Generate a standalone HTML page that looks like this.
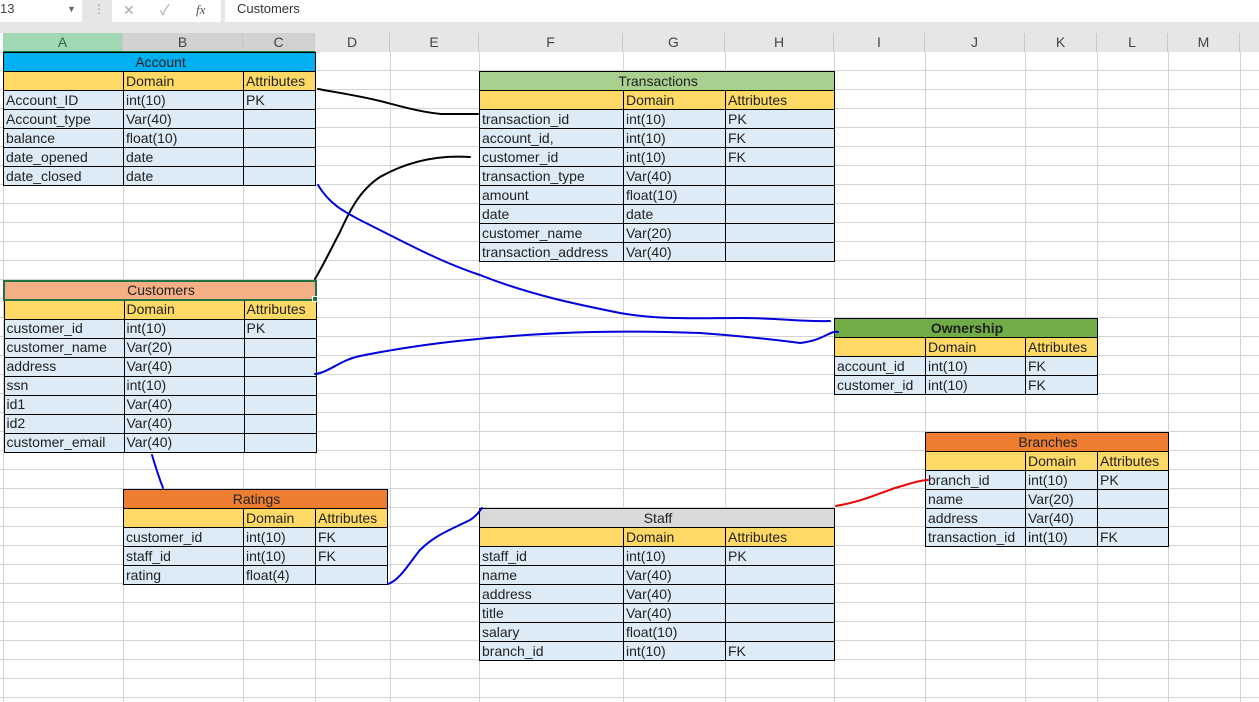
<!DOCTYPE html>
<html><head><meta charset="utf-8"><style>
*{box-sizing:border-box;margin:0;padding:0}
body{width:1259px;height:702px;overflow:hidden;background:#fff;font-family:"Liberation Sans","Noto Sans CJK SC",sans-serif;position:relative;color:#222}
.a{position:absolute}
table{position:absolute;border-collapse:collapse;table-layout:fixed;font-size:14px}
td{border:1px solid #000;height:19px;padding:0 0 0 2px;line-height:17px;white-space:nowrap;overflow:hidden;background:#DDEBF7}
tr.t td{text-align:center}
tr.h td{background:#FFD966}
.ch{position:absolute;top:33px;height:19px;font-size:14px;text-align:center;line-height:19px;color:#444;border-right:1px solid #C8C8C8;background:#E6E6E6}
</style></head><body>
<!-- top bars -->
<div class="a" style="left:0;top:0;width:1259px;height:33px;background:#E6E6E6"></div>
<div class="a" style="left:0;top:0;width:82px;height:22px;background:#fff;font-size:13px;line-height:18px;color:#444">13<span style="position:absolute;left:67px;top:0;font-size:9px;color:#666">▼</span></div>
<div class="a" style="left:93px;top:2px;font-size:12px;color:#999">⋮</div>
<div class="a" style="left:112px;top:0;width:109px;height:22px;background:#fff;font-size:14px;color:#aaa;line-height:20px"><span style="position:absolute;left:11px">✕</span><span style="position:absolute;left:48px">✓</span><span style="position:absolute;left:84px;font-style:italic;font-family:'Liberation Serif',serif;color:#555;font-size:13px">fx</span></div>
<div class="a" style="left:225px;top:0;width:1034px;height:22px;background:#fff;font-size:13px;line-height:18px;padding-left:12px;color:#333">Customers</div>
<!-- gridlines -->
<div class="a" style="left:0;top:52px;width:1259px;height:650px;background:repeating-linear-gradient(to bottom,transparent 0,transparent 18px,#D4D4D4 18px,#D4D4D4 19px)"></div>
<svg class="a" style="left:0;top:52px" width="1259" height="650"><g stroke="#D4D4D4" stroke-width="1">
<line x1="3.5" y1="0" x2="3.5" y2="650"/><line x1="123.5" y1="0" x2="123.5" y2="650"/><line x1="243.5" y1="0" x2="243.5" y2="650"/><line x1="315.5" y1="0" x2="315.5" y2="650"/><line x1="390.5" y1="0" x2="390.5" y2="650"/><line x1="479.5" y1="0" x2="479.5" y2="650"/><line x1="623.5" y1="0" x2="623.5" y2="650"/><line x1="725.5" y1="0" x2="725.5" y2="650"/><line x1="834.5" y1="0" x2="834.5" y2="650"/><line x1="925.5" y1="0" x2="925.5" y2="650"/><line x1="1025.5" y1="0" x2="1025.5" y2="650"/><line x1="1097.5" y1="0" x2="1097.5" y2="650"/><line x1="1168.5" y1="0" x2="1168.5" y2="650"/><line x1="1240.5" y1="0" x2="1240.5" y2="650"/></g></svg>
<!-- column headers -->
<div class="ch" style="left:3px;width:120px;background:#A0D8B3;color:#1E6B3A">A</div>
<div class="ch" style="left:123px;width:120px;background:#D2D2D2">B</div>
<div class="ch" style="left:243px;width:72px;background:#D2D2D2">C</div>
<div class="ch" style="left:315px;width:75px">D</div>
<div class="ch" style="left:390px;width:89px">E</div>
<div class="ch" style="left:479px;width:144px">F</div>
<div class="ch" style="left:623px;width:102px">G</div>
<div class="ch" style="left:725px;width:109px">H</div>
<div class="ch" style="left:834px;width:91px">I</div>
<div class="ch" style="left:925px;width:100px">J</div>
<div class="ch" style="left:1025px;width:72px">K</div>
<div class="ch" style="left:1097px;width:71px">L</div>
<div class="ch" style="left:1168px;width:72px">M</div>
<div class="ch" style="left:1240px;width:19px;border:none"></div>
<div class="a" style="left:3px;top:51px;width:312px;height:2px;background:#217346"></div>

<!-- Account -->
<table style="left:3px;top:52px;width:313px"><colgroup><col style="width:120px"><col style="width:120px"><col style="width:72px"></colgroup>
<tr class="t"><td colspan="3" style="background:#00B0F0">Account</td></tr>
<tr class="h"><td></td><td>Domain</td><td>Attributes</td></tr>
<tr><td>Account_ID</td><td>int(10)</td><td>PK</td></tr>
<tr><td>Account_type</td><td>Var(40)</td><td></td></tr>
<tr><td>balance</td><td>float(10)</td><td></td></tr>
<tr><td>date_opened</td><td>date</td><td></td></tr>
<tr><td>date_closed</td><td>date</td><td></td></tr></table>

<!-- Transactions -->
<table style="left:479px;top:71px;width:356px"><colgroup><col style="width:144px"><col style="width:102px"><col style="width:109px"></colgroup>
<tr class="t"><td colspan="3" style="background:#A9D08E">Transactions</td></tr>
<tr class="h"><td></td><td>Domain</td><td>Attributes</td></tr>
<tr><td>transaction_id</td><td>int(10)</td><td>PK</td></tr>
<tr><td>account_id,</td><td>int(10)</td><td>FK</td></tr>
<tr><td>customer_id</td><td>int(10)</td><td>FK</td></tr>
<tr><td>transaction_type</td><td>Var(40)</td><td></td></tr>
<tr><td>amount</td><td>float(10)</td><td></td></tr>
<tr><td>date</td><td>date</td><td></td></tr>
<tr><td>customer_name</td><td>Var(20)</td><td></td></tr>
<tr><td>transaction_address</td><td>Var(40)</td><td></td></tr></table>

<!-- Customers -->
<table style="left:3px;top:280px;width:313px"><colgroup><col style="width:120px"><col style="width:120px"><col style="width:72px"></colgroup>
<tr class="t"><td colspan="3" style="background:#F4B084;border:2px solid #217346">Customers</td></tr>
<tr class="h"><td></td><td>Domain</td><td>Attributes</td></tr>
<tr><td>customer_id</td><td>int(10)</td><td>PK</td></tr>
<tr><td>customer_name</td><td>Var(20)</td><td></td></tr>
<tr><td>address</td><td>Var(40)</td><td></td></tr>
<tr><td>ssn</td><td>int(10)</td><td></td></tr>
<tr><td>id1</td><td>Var(40)</td><td></td></tr>
<tr><td>id2</td><td>Var(40)</td><td></td></tr>
<tr><td>customer_email</td><td>Var(40)</td><td></td></tr></table>
<div class="a" style="left:312px;top:296px;width:6px;height:6px;background:#217346;border:1px solid #fff"></div>

<!-- Ownership -->
<table style="left:834px;top:318px;width:264px"><colgroup><col style="width:91px"><col style="width:100px"><col style="width:72px"></colgroup>
<tr class="t"><td colspan="3" style="background:#70AD47;font-weight:bold">Ownership</td></tr>
<tr class="h"><td></td><td>Domain</td><td>Attributes</td></tr>
<tr><td>account_id</td><td>int(10)</td><td>FK</td></tr>
<tr><td>customer_id</td><td>int(10)</td><td>FK</td></tr></table>

<!-- Branches -->
<table style="left:925px;top:432px;width:244px"><colgroup><col style="width:100px"><col style="width:72px"><col style="width:71px"></colgroup>
<tr class="t"><td colspan="3" style="background:#ED7D31">Branches</td></tr>
<tr class="h"><td></td><td>Domain</td><td>Attributes</td></tr>
<tr><td>branch_id</td><td>int(10)</td><td>PK</td></tr>
<tr><td>name</td><td>Var(20)</td><td></td></tr>
<tr><td>address</td><td>Var(40)</td><td></td></tr>
<tr><td>transaction_id</td><td>int(10)</td><td>FK</td></tr></table>

<!-- Ratings -->
<table style="left:123px;top:489px;width:265px"><colgroup><col style="width:120px"><col style="width:72px"><col style="width:72px"></colgroup>
<tr class="t"><td colspan="3" style="background:#ED7D31">Ratings</td></tr>
<tr class="h"><td></td><td>Domain</td><td>Attributes</td></tr>
<tr><td>customer_id</td><td>int(10)</td><td>FK</td></tr>
<tr><td>staff_id</td><td>int(10)</td><td>FK</td></tr>
<tr><td>rating</td><td>float(4)</td><td></td></tr></table>

<!-- Staff -->
<table style="left:479px;top:508px;width:356px"><colgroup><col style="width:144px"><col style="width:102px"><col style="width:109px"></colgroup>
<tr class="t"><td colspan="3" style="background:#D9D9D9">Staff</td></tr>
<tr class="h"><td></td><td>Domain</td><td>Attributes</td></tr>
<tr><td>staff_id</td><td>int(10)</td><td>PK</td></tr>
<tr><td>name</td><td>Var(40)</td><td></td></tr>
<tr><td>address</td><td>Var(40)</td><td></td></tr>
<tr><td>title</td><td>Var(40)</td><td></td></tr>
<tr><td>salary</td><td>float(10)</td><td></td></tr>
<tr><td>branch_id</td><td>int(10)</td><td>FK</td></tr></table>

<!-- connector lines -->
<svg class="a" style="left:0;top:0" width="1259" height="702" fill="none" stroke-width="2" stroke-linecap="round">
<path stroke="#000" d="M318 89 C340 93 360 96 380 101 C400 106 420 112 441 114 L478 114"/>
<path stroke="#000" d="M315 279 C325 262 333 245 340 232 C350 210 360 190 380 177 C410 160 440 155 470 157"/>
<path stroke="#00d" d="M318 185 C330 205 345 212 360 220 C400 240 440 262 480 275 C530 295 580 305 620 313 C660 320 700 318 740 318 C780 318 800 322 830 321"/>
<path stroke="#00d" d="M315 374 C330 372 340 360 360 356 C400 348 440 342 500 337 C560 332 620 330 700 333 C740 336 770 339 800 343 C825 340 830 330 838 332"/>
<path stroke="#00d" d="M152 455 C155 465 158 475 163 488"/>
<path stroke="#00d" d="M388 584 C400 580 410 562 420 550 C435 535 450 530 470 520 C478 515 480 510 482 508"/>
<path stroke="#e00" d="M836 506 C860 502 875 495 895 488 C910 484 915 481 928 480"/>
</svg>
</body></html>
